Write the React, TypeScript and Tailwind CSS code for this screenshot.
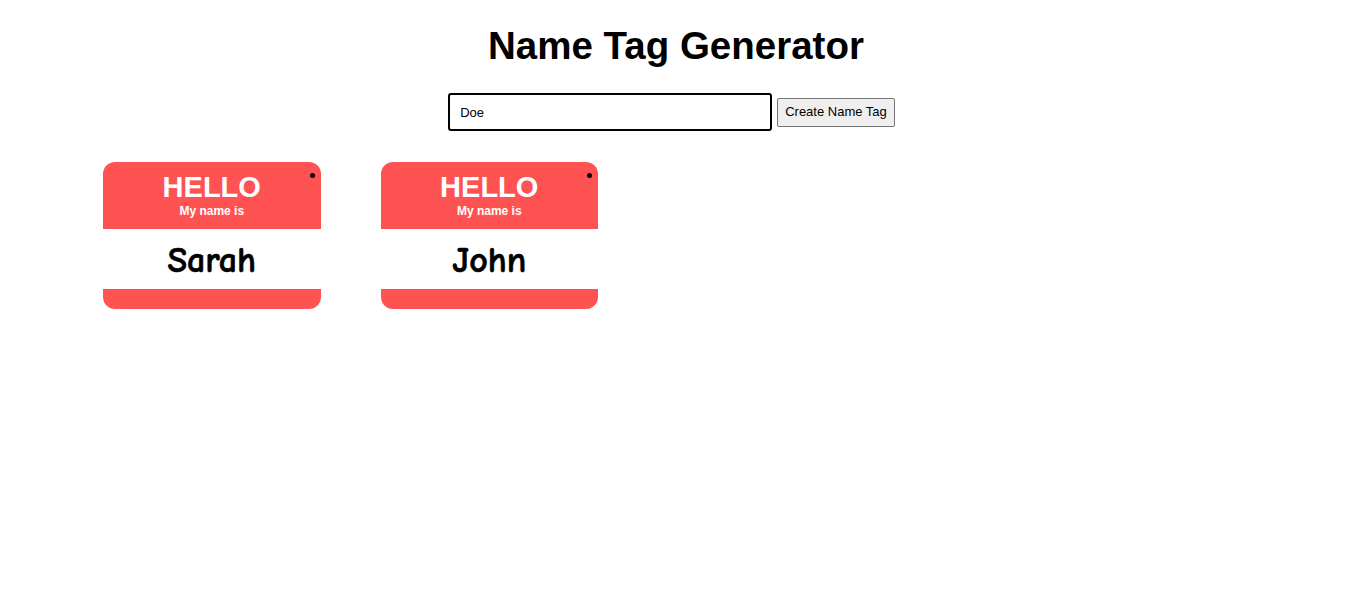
import { useState } from "react";

const initialNames = ["Sarah", "John"];

function NameTag({ name }: { name: string }) {
  return (
    <div className="relative flex h-[147px] w-[217.5px] flex-col overflow-hidden rounded-[12px] bg-[#ff5252]">
      <span className="absolute right-[6px] top-[11px] h-[5px] w-[5px] rounded-full bg-black" />
      <div className="flex h-[67px] flex-col items-center pt-[9px] text-white">
        <span className="text-[29px] font-bold leading-[32px]">HELLO</span>
        <span className="text-[12px] font-bold leading-[17px]">My name is</span>
      </div>
      <div className="flex h-[60px] items-center justify-center bg-white pt-[4px]">
        <span className="font-['Comic_Sans_MS','Comic_Neue',cursive] text-[36px] font-bold text-black [-webkit-text-stroke:0.6px_black]">
          {name}
        </span>
      </div>
    </div>
  );
}

export default function App() {
  const [value, setValue] = useState("Doe");
  const [names, setNames] = useState(initialNames);

  return (
    <div className="min-h-[606px] bg-white font-['Liberation_Sans',Arial,sans-serif] text-black">
      <h1 className="pt-[24px] text-center text-[38.5px] font-bold leading-[44px]">
        Name Tag Generator
      </h1>
      <div className="mt-[25px] flex items-center justify-center gap-[5px] pr-[9px]">
        <input
          autoFocus
          value={value}
          onChange={(e) => setValue(e.target.value)}
          className="h-[38px] w-[324px] rounded-[3px] border-2 border-black px-[10px] text-[13px] outline-none"
        />
        <button
          onClick={() => value.trim() && setNames([...names, value.trim()])}
          className="h-[29px] rounded-[2px] border border-[#767676] bg-[#efefef] px-[7px] text-[13px]"
        >
          Create Name Tag
        </button>
      </div>
      <div className="mt-[31px] flex flex-wrap gap-[60px] pl-[103px]">
        {names.map((n, i) => (
          <NameTag key={i} name={n} />
        ))}
      </div>
    </div>
  );
}
